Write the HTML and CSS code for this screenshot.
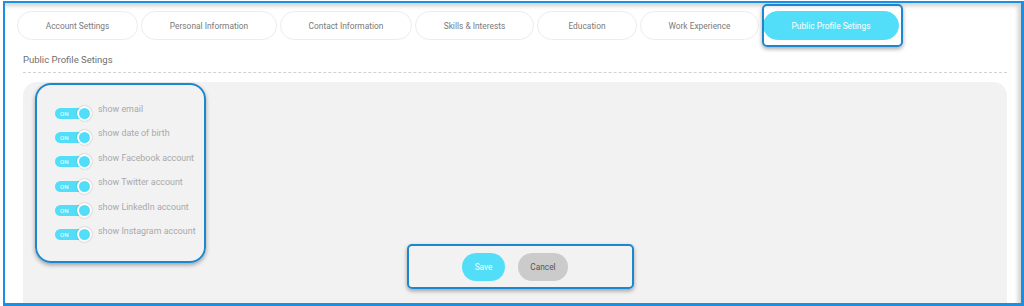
FILE: index.html
```html
<!DOCTYPE html>
<html lang="en">
<head>
<meta charset="utf-8">
<title>Public Profile Settings</title>
<link rel="stylesheet" href="styles.css">
</head>
<body>
<div class="frame">
  <nav class="tabs">
    <a class="tab t1">Account Settings</a>
    <a class="tab t2">Personal Information</a>
    <a class="tab t3">Contact Information</a>
    <a class="tab t4">Skills &amp; Interests</a>
    <a class="tab t5">Education</a>
    <a class="tab t6">Work Experience</a>
    <a class="tab t7 active">Public Profile Setings<span class="hl hl-tab"></span></a>
  </nav>
  <h2 class="heading">Public Profile Setings</h2>
  <section class="panel">
    <ul class="toggles">
      <li class="row"><span class="toggle"><span class="track">ON</span><span class="knob"></span></span><span class="label">show email</span></li>
      <li class="row"><span class="toggle"><span class="track">ON</span><span class="knob"></span></span><span class="label">show date of birth</span></li>
      <li class="row"><span class="toggle"><span class="track">ON</span><span class="knob"></span></span><span class="label">show Facebook account</span></li>
      <li class="row"><span class="toggle"><span class="track">ON</span><span class="knob"></span></span><span class="label">show Twitter account</span></li>
      <li class="row"><span class="toggle"><span class="track">ON</span><span class="knob"></span></span><span class="label">show LinkedIn account</span></li>
      <li class="row"><span class="toggle"><span class="track">ON</span><span class="knob"></span></span><span class="label">show Instagram account</span></li>
    </ul>
    <div class="actions">
      <button class="btn save">Save</button>
      <button class="btn cancel">Cancel</button>
    </div>
    <span class="hl hl-toggles"></span>
    <span class="hl hl-actions"></span>
  </section>
</div>
</body>
</html>
```
FILE: styles.css
```css
* { box-sizing: border-box; }
html, body { margin: 0; padding: 0; background: #ffffff; }
body { font-family: Roboto, "Liberation Sans", sans-serif; width: 1024px; height: 306px; overflow: hidden; }

.frame {
  margin: 1px 0 0 3px;
  width: 1021px;
  height: 305px;
  border-style: solid;
  border-color: #1b8fe2;
  border-width: 2px 3px 3px 2.5px;
  box-shadow: inset -3px 3px 4px rgba(0,0,0,0.18);
  padding: 8px 14px 0 18px;
  overflow: hidden;
  background: #fff;
}

.tabs {
  display: flex;
  gap: 3px;
  margin-left: -6px;
  height: 29px;
}
.tab {
  position: relative;
  display: flex;
  align-items: center;
  justify-content: center;
  height: 29px;
  border: 1px solid #ececec;
  border-radius: 15px;
  font-size: 8.4px;
  color: #7a7a7a;
  background: #fff;
  white-space: nowrap;
}
.t1 { width: 121px; }
.t2 { width: 136px; }
.t3 { width: 132px; }
.t4 { width: 119px; }
.t5 { width: 100px; }
.t6 { width: 119px; }
.t7 { width: 136px; margin-left: 1px; }
.tab.active {
  background: #52def9;
  border-color: #52def9;
  color: #ffffff;
}

.hl {
  position: absolute;
  border: 2px solid #1c86cf;
  box-shadow: 0 2px 4px rgba(0,0,0,0.35);
  pointer-events: none;
}
.hl-tab {
  left: -2px;
  top: -8px;
  width: 141px;
  height: 43px;
  border-radius: 5px;
}

.heading {
  margin: 14px 0 0 0;
  padding: 0 0 6px 0;
  font-size: 9.5px;
  line-height: 12px;
  font-weight: 400;
  color: #6f6f6f;
  border-bottom: 1px dashed #d2d2d2;
}

.panel {
  position: relative;
  margin-top: 9px;
  height: 240px;
  background: #f2f2f2;
  border-radius: 14px 14px 0 0;
  padding: 21px 0 0 32px;
}

.toggles {
  list-style: none;
  margin: 0;
  padding: 0;
}
.row {
  display: flex;
  align-items: flex-start;
  gap: 6px;
  height: 24.4px;
}
.toggle {
  position: relative;
  display: block;
  width: 37px;
  height: 16px;
  margin-top: 2px;
  flex: none;
}
.track {
  display: flex;
  align-items: center;
  width: 31px;
  height: 11px;
  margin-top: 2.5px;
  background: #52def9;
  border-radius: 6px;
  color: #fff;
  font-size: 6px;
  padding-left: 5px;
  letter-spacing: 0.2px;
}
.knob {
  position: absolute;
  right: 0;
  top: 0.5px;
  width: 15px;
  height: 15px;
  border-radius: 50%;
  background: #52def9;
  border: 2px solid #ffffff;
  box-shadow: 0 0 1.5px rgba(0,0,0,0.35);
}
.label {
  font-size: 8.9px;
  line-height: 12px;
  color: #a9a9a9;
  white-space: nowrap;
}

.actions {
  display: flex;
  justify-content: center;
  gap: 13px;
  margin-left: -32px;
  margin-top: 4px;
}
.btn {
  height: 28px;
  border: none;
  border-radius: 14px;
  font-family: Roboto, "Liberation Sans", sans-serif;
  font-size: 8.3px;
  padding: 0;
}
.save { width: 43px; background: #52def9; color: #fff; }
.cancel { width: 50px; background: #cbcbcb; color: #555; }

.hl-toggles {
  left: 12px;
  top: 1px;
  width: 171px;
  height: 180px;
  border-radius: 16px;
}
.hl-actions {
  left: 384px;
  top: 162px;
  width: 227px;
  height: 45px;
  border-radius: 5px;
}
```
